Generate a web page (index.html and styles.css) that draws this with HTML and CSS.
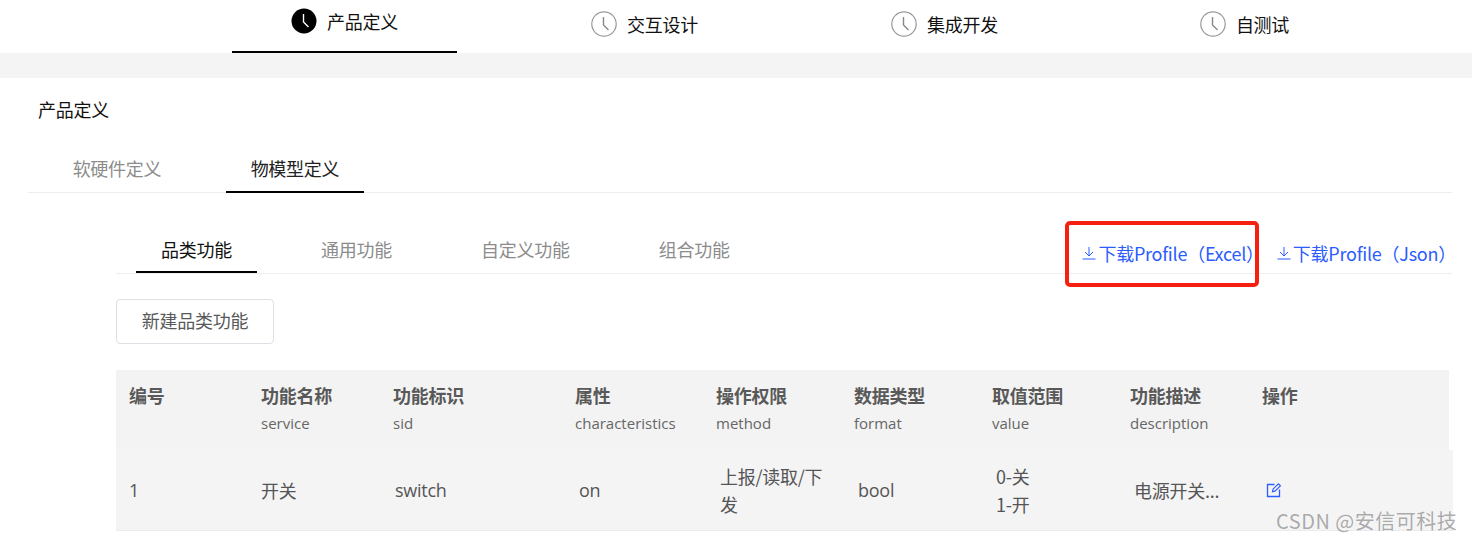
FILE: index.html
```html
<!DOCTYPE html>
<html lang="zh">
<head>
<meta charset="utf-8">
<title>产品定义</title>
<link rel="stylesheet" href="styles.css">
</head>
<body>
<nav class="steps">
  <div class="step step-active">
    <svg class="clock" viewBox="0 0 26 26"><circle cx="13" cy="13" r="12.5" fill="#000"/><path d="M12.5 6v8l5 5" fill="none" stroke="#fff" stroke-width="1.4"/></svg>
    <span>产品定义</span>
  </div>
  <div class="step">
    <svg class="clock" viewBox="0 0 26 26"><circle cx="13" cy="13" r="12.2" fill="#fff" stroke="#999" stroke-width="1.2"/><path d="M12.5 6v8l5 5" fill="none" stroke="#888" stroke-width="1.4"/></svg>
    <span>交互设计</span>
  </div>
  <div class="step">
    <svg class="clock" viewBox="0 0 26 26"><circle cx="13" cy="13" r="12.2" fill="#fff" stroke="#999" stroke-width="1.2"/><path d="M12.5 6v8l5 5" fill="none" stroke="#888" stroke-width="1.4"/></svg>
    <span>集成开发</span>
  </div>
  <div class="step">
    <svg class="clock" viewBox="0 0 26 26"><circle cx="13" cy="13" r="12.2" fill="#fff" stroke="#999" stroke-width="1.2"/><path d="M12.5 6v8l5 5" fill="none" stroke="#888" stroke-width="1.4"/></svg>
    <span>自测试</span>
  </div>
</nav>
<div class="band"></div>
<main class="page">
  <h1 class="title">产品定义</h1>
  <div class="tabs">
    <a class="tab">软硬件定义</a>
    <a class="tab tab-active">物模型定义</a>
  </div>
  <section class="content">
    <div class="subtabs">
      <a class="subtab subtab-active">品类功能</a>
      <a class="subtab">通用功能</a>
      <a class="subtab">自定义功能</a>
      <a class="subtab">组合功能</a>
      <div class="downloads">
        <a class="dl dl-marked">
          <svg class="dl-icon" viewBox="0 0 14 14"><path d="M7 1v8.5M3 6l4 4 4-4M0.5 13h13" fill="none" stroke="#2b5cff" stroke-width="1"/></svg>下载Profile（Excel）
          <span class="marker"></span>
        </a>
        <a class="dl">
          <svg class="dl-icon" viewBox="0 0 14 14"><path d="M7 1v8.5M3 6l4 4 4-4M0.5 13h13" fill="none" stroke="#2b5cff" stroke-width="1"/></svg>下载Profile（Json）
        </a>
      </div>
    </div>
    <button class="btn">新建品类功能</button>
    <div class="table">
      <div class="thead">
        <div class="th"><b>编号</b></div>
        <div class="th"><b>功能名称</b><small>service</small></div>
        <div class="th"><b>功能标识</b><small>sid</small></div>
        <div class="th"><b>属性</b><small>characteristics</small></div>
        <div class="th"><b>操作权限</b><small>method</small></div>
        <div class="th"><b>数据类型</b><small>format</small></div>
        <div class="th"><b>取值范围</b><small>value</small></div>
        <div class="th"><b>功能描述</b><small>description</small></div>
        <div class="th"><b>操作</b></div>
      </div>
      <div class="tr">
        <div class="td">1</div>
        <div class="td">开关</div>
        <div class="td td-sid">switch</div>
        <div class="td td-in">on</div>
        <div class="td td-in">上报/读取/下发</div>
        <div class="td td-in">bool</div>
        <div class="td td-in">0-关<br>1-开</div>
        <div class="td td-in">电源开关...</div>
        <div class="td td-in">
          <svg class="edit" viewBox="0 0 16 16"><path d="M8.5 2.5H1.5v12h12V7.5" fill="none" stroke="#2b5cff" stroke-width="1.3"/><path d="M6.5 9.8l.5-2.6 5.4-5.4 2 2-5.4 5.4z" fill="none" stroke="#2b5cff" stroke-width="1.2"/></svg>
        </div>
      </div>
    </div>
  </section>
</main>
<div class="watermark">CSDN @安信可科技</div>
</body>
</html>
```
FILE: styles.css
```css
* { box-sizing: border-box; }
html, body { margin: 0; padding: 0; }
body {
  height: 540px;
  overflow: hidden;
  background: #fff;
  color: #000;
  font-family: "Noto Sans CJK SC", "Open Sans", sans-serif;
  font-size: 18px;
  letter-spacing: -0.25px;
  position: relative;
}
.steps {
  display: flex;
  gap: 75px;
  height: 53px;
  padding-left: 232px;
}
.step {
  width: 225px;
  height: 53px;
  display: flex;
  justify-content: center;
  align-items: flex-start;
  gap: 10px;
  padding-top: 11px;
  line-height: 26px;
  color: #111;
}
.step-active {
  padding-top: 8px;
  border-bottom: 2px solid #000;
}
.clock { width: 26px; height: 26px; flex: none; }
.band { height: 25px; background: #f4f4f4; }
.page { padding: 0 20px 0 28px; }
.title {
  margin: 0;
  padding: 18px 0 0 10px;
  font-size: 18px;
  font-weight: 400;
  line-height: 26px;
  color: #111;
}
.tabs {
  display: flex;
  margin-top: 28px;
  height: 43px;
  border-bottom: 1px solid #eee;
  padding-left: 20px;
  gap: 40px;
}
.tab {
  width: 138px;
  height: 43px;
  text-align: center;
  line-height: 26px;
  padding-top: 5px;
  color: #8c8c8c;
}
.tab-active {
  color: #222;
  border-bottom: 2px solid #000;
}
.content { padding-left: 88px; }
.subtabs {
  display: flex;
  height: 81px;
  border-bottom: 1px solid #eee;
  padding: 28px 0 0 20px;
}
.subtab {
  height: 52px;
  padding: 15px 25px 0;
  margin-right: 39px;
  text-align: center;
  line-height: 26px;
  color: #8c8c8c;
}
.subtab-active {
  color: #111;
  border-bottom: 2px solid #000;
}
.downloads {
  margin-left: auto;
  margin-right: -4px;
  margin-top: 19px;
  display: flex;
  gap: 13px;
  height: 26px;
}
.dl {
  position: relative;
  display: flex;
  align-items: center;
  height: 26px;
  line-height: 26px;
  color: #2b5cff;
  white-space: nowrap;
}
.dl-icon { width: 14px; height: 14px; margin-right: 2px; flex: none; }
.marker {
  position: absolute;
  left: -17px;
  top: -19px;
  width: 194px;
  height: 66px;
  border: 4px solid #f5200f;
  border-radius: 5px;
}
.btn {
  display: block;
  margin-top: 25px;
  width: 158px;
  height: 45px;
  background: #fff;
  border: 1px solid #dedee4;
  border-radius: 4px;
  font: inherit;
  letter-spacing: inherit;
  color: #595959;
  padding: 0 0 3px;
}
.table { margin-top: 26px; width: 1333px; }
.thead, .tr {
  display: grid;
  grid-template-columns: 132px 132px 182px 141px 138px 138px 138px 132px 1fr;
  background: #f3f3f3;
}
.thead { height: 80px; padding-top: 12px; }
.tr {
  height: 81px;
  width: 1337px;
  align-items: center;
  background: #f4f4f5;
  border-bottom: 1px solid #ececf0;
}
.th { padding-left: 13px; color: #595959; }
.th b {
  display: block;
  font-weight: 700;
  font-size: 18px;
  line-height: 26px;
}
.th small {
  display: block;
  margin-top: 3px;
  font-size: 15px;
  line-height: 24px;
  letter-spacing: 0;
  color: #666;
  font-family: "Open Sans", "Noto Sans CJK SC", sans-serif;
}
.td {
  padding-left: 13px;
  padding-right: 10px;
  line-height: 28px;
  color: #555;
  font-size: 18px;
}
.td-in { padding-left: 17px; }
.td-sid { padding-left: 15px; }
.td:nth-child(3), .td:nth-child(4), .td:nth-child(6), .td:first-child { font-family: "Open Sans", "Noto Sans CJK SC", sans-serif; }
.edit { width: 16px; height: 16px; display: block; }
.watermark {
  position: absolute;
  left: 1276px;
  top: 507px;
  font-size: 20px;
  letter-spacing: 0.5px;
  line-height: 28px;
  color: rgba(120, 120, 120, .6);
  white-space: nowrap;
}
```
